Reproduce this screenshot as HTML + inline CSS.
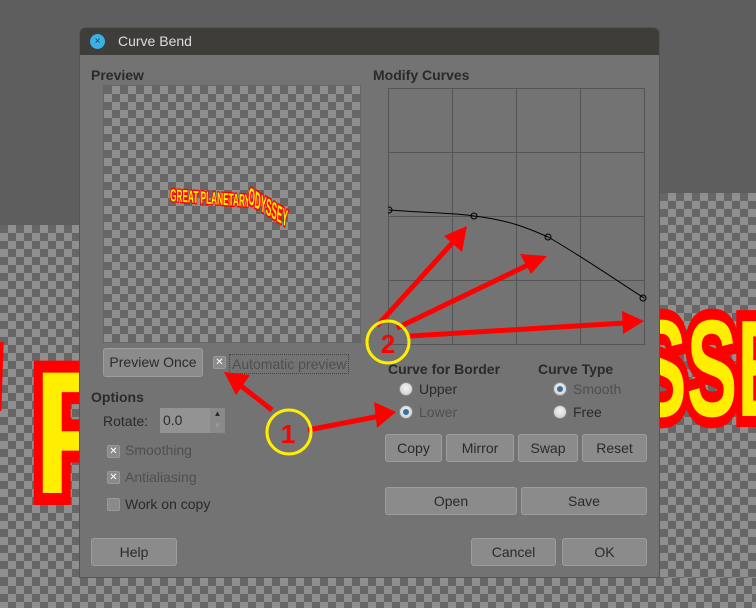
<!DOCTYPE html>
<html><head><meta charset="utf-8"><style>
*{box-sizing:border-box;margin:0;padding:0}
body{width:756px;height:608px;overflow:hidden;position:relative;background:#5e5e5e;font-family:"Liberation Sans","DejaVu Sans",sans-serif;font-size:14px;color:#2a2a2a}
.chk{position:absolute;background-color:#666;background-image:linear-gradient(45deg,#8f8f8f 25%,transparent 25%,transparent 75%,#8f8f8f 75%),linear-gradient(45deg,#8f8f8f 25%,transparent 25%,transparent 75%,#8f8f8f 75%);background-size:16px 16px;background-position:0 0,8px 8px}
.dlg{position:absolute;left:79px;top:27px;width:581px;height:551px;background:#737373;border-radius:6px 6px 0 0;overflow:hidden;border:1px solid #555}
.title{height:27px;background:#3e3d39;color:#ddd;font-size:14px;line-height:27px;padding-left:38px;position:relative}
.close{position:absolute;left:10px;top:6px;width:15px;height:15px;border-radius:50%;background:#3cb0e4;color:#333;font-size:10px;text-align:center;line-height:15px}
.a{position:absolute}
.h{font-weight:bold;color:#2a2a2a;font-size:14px}
.btn{position:absolute;background:#8b8b8b;border:1px solid #9d9d9d;border-radius:3px;text-align:center;color:#2a2a2a;font-size:14px}
.cb{position:absolute;width:13px;height:13px;border:1px solid #999;border-radius:2px;background:#8a8a8a;color:#fff;font-size:10px;font-weight:bold;text-align:center;line-height:11px}
.rd{position:absolute;width:14px;height:14px;border-radius:50%;background:radial-gradient(circle at 50% 40%,#f4f4f4,#c9c9c9);border:1px solid #888}
.rd.on::after{content:"";position:absolute;left:3px;top:3px;width:6px;height:6px;border-radius:50%;background:#3b6f9a}
.dim{color:#4f4f4f}
</style></head><body>
<div class="chk" style="left:0;top:225px;width:80px;height:383px"></div>
<div class="chk" style="left:660px;top:193px;width:96px;height:415px"></div>
<div class="chk" style="left:0;top:578px;width:756px;height:30px"></div>
<svg class="a" style="left:0;top:0" width="756" height="608">
<g font-family="Liberation Sans" font-weight="bold" fill="#ffee00" stroke="#ff0000" stroke-width="24" paint-order="stroke" stroke-linejoin="miter">
<text transform="translate(34,493) scale(0.75,1)" font-size="175">P</text>
<text transform="translate(-48,478) scale(0.6,1)" font-size="180">"</text>
<text transform="translate(636,416) scale(0.55,1)" font-size="138" stroke-width="22">SSE</text>
</g></svg>
<div class="dlg">
<div class="title"><div class="close">×</div>Curve Bend</div>
<div class="a h" style="left:11px;top:39px">Preview</div>
<div class="a h" style="left:293px;top:39px">Modify Curves</div>
<div class="chk" style="left:23px;top:57px;width:258px;height:258px;border:1px solid #666"></div>
<svg class="a" style="left:88px;top:155px" width="140" height="60"><g font-family="Liberation Sans" font-weight="bold" font-size="15" fill="#ffee00" stroke="#ff0000" stroke-width="2.5" paint-order="stroke"><text transform="translate(2,18) scale(0.55,1.15) rotate(2)">GREAT PLANETARY</text><text transform="translate(80,20) scale(0.55,1.6) rotate(12)">ODYSSEY</text></g></svg>
<svg class="a" style="left:308px;top:60px" width="260" height="260">
<g stroke="#555" stroke-width="1" fill="none">
<rect x="0.5" y="0.5" width="256" height="256"/>
<path d="M64.5 0V257M128.5 0V257M192.5 0V257M0 64.5H257M0 128.5H257M0 192.5H257"/>
</g>
<path d="M1 122 C40 125 70 125 86 128 C120 132 140 140 160 149 C190 166 225 190 256 210" stroke="#000" fill="none" stroke-width="1"/>
<g stroke="#000" fill="none"><circle cx="1" cy="122" r="3"/><circle cx="86" cy="128" r="3"/><circle cx="160" cy="149" r="3"/><circle cx="255" cy="210" r="3"/></g>
</svg>
<div class="btn" style="left:23px;top:320px;width:100px;height:29px;line-height:27px">Preview Once</div>
<div class="cb" style="left:133px;top:328px">✕</div>
<div class="a dim" style="left:149px;top:326px;border:1px dotted #444;padding:0 2px;height:20px;line-height:18px;font-size:14px">Automatic preview</div>
<div class="a h" style="left:11px;top:361px">Options</div>
<div class="a" style="left:23px;top:385px">Rotate:</div>
<div class="a" style="left:80px;top:380px;width:50px;height:25px;background:#939393;padding:4px 3px">0.0</div>
<div class="a" style="left:130px;top:380px;width:15px;height:25px;background:#8a8a8a;font-size:8px;text-align:center;line-height:12px">▲<br><span style="color:#999">▼</span></div>
<div class="cb" style="left:27px;top:417px">✕</div><div class="a dim" style="left:45px;top:414px">Smoothing</div>
<div class="cb" style="left:27px;top:443px">✕</div><div class="a dim" style="left:45px;top:441px">Antialiasing</div>
<div class="cb" style="left:27px;top:470px"></div><div class="a" style="left:45px;top:468px">Work on copy</div>
<div class="a h" style="left:308px;top:333px">Curve for Border</div>
<div class="a h" style="left:458px;top:333px">Curve Type</div>
<div class="rd" style="left:319px;top:354px"></div><div class="a" style="left:339px;top:353px">Upper</div>
<div class="rd on" style="left:319px;top:377px"></div><div class="a dim" style="left:339px;top:376px">Lower</div>
<div class="rd on" style="left:473px;top:354px"></div><div class="a dim" style="left:493px;top:353px">Smooth</div>
<div class="rd" style="left:473px;top:377px"></div><div class="a" style="left:493px;top:376px">Free</div>
<div class="btn" style="left:305px;top:406px;width:57px;height:28px;line-height:26px">Copy</div>
<div class="btn" style="left:366px;top:406px;width:68px;height:28px;line-height:26px">Mirror</div>
<div class="btn" style="left:438px;top:406px;width:60px;height:28px;line-height:26px">Swap</div>
<div class="btn" style="left:502px;top:406px;width:65px;height:28px;line-height:26px">Reset</div>
<div class="btn" style="left:305px;top:459px;width:132px;height:28px;line-height:26px">Open</div>
<div class="btn" style="left:441px;top:459px;width:126px;height:28px;line-height:26px">Save</div>
<div class="btn" style="left:11px;top:510px;width:86px;height:28px;line-height:26px">Help</div>
<div class="btn" style="left:391px;top:510px;width:85px;height:28px;line-height:26px">Cancel</div>
<div class="btn" style="left:482px;top:510px;width:85px;height:28px;line-height:26px">OK</div>
</div>
<svg class="a" style="left:0;top:0" width="756" height="608">
<g stroke="#ff0000" stroke-width="5" fill="#ff0000">
<line x1="272" y1="410" x2="236" y2="382"/><polygon points="224,372 250,375 236,395" stroke="none"/>
<line x1="308" y1="430" x2="380" y2="416"/><polygon points="396,412 374,402 377,428" stroke="none"/>
<line x1="377" y1="326" x2="455" y2="240"/><polygon points="467,226 444,236 462,252" stroke="none"/>
<line x1="397" y1="328" x2="530" y2="264"/><polygon points="547,256 520,254 531,274" stroke="none"/>
<line x1="410" y1="336" x2="625" y2="323"/><polygon points="644,321 622,311 623,334" stroke="none"/>
</g>
<g fill="none" stroke="#ffee00" stroke-width="3"><circle cx="289" cy="432" r="22"/><circle cx="388" cy="342" r="21"/></g>
<g font-family="Liberation Sans" font-weight="bold" font-size="26" fill="#ff0000" text-anchor="middle"><text x="288" y="443">1</text><text x="388" y="353">2</text></g>
</svg>
</body></html>
